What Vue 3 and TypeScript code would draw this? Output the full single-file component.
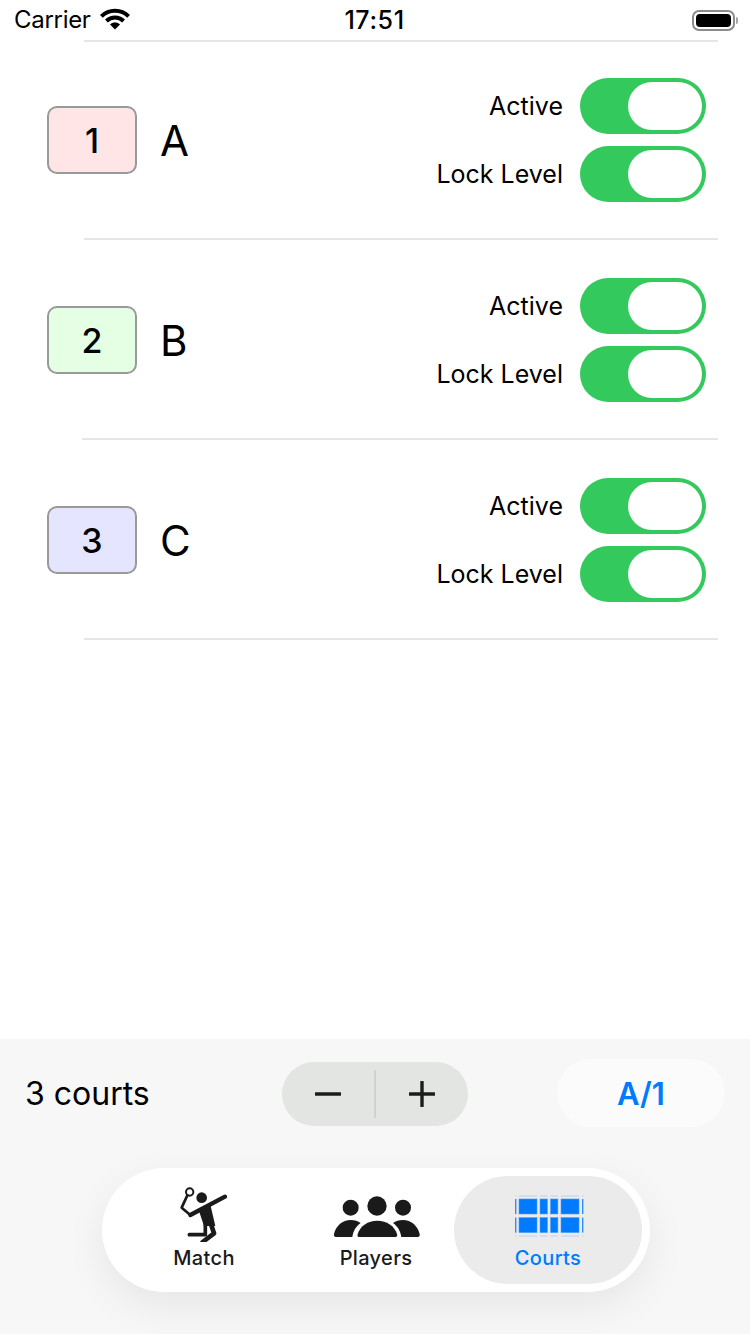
<script setup lang="ts">
import { ref } from 'vue'

type Court = { id: number; name: string; tint: string }

const courts = ref<Court[]>([
  { id: 1, name: 'A', tint: '#ffe5e5' },
  { id: 2, name: 'B', tint: '#e5ffe5' },
  { id: 3, name: 'C', tint: '#e5e5ff' },
])

const cellXs = [
  { x: 14, w: 18 },
  { x: 35, w: 7.4 },
  { x: 45.5, w: 7.4 },
  { x: 56, w: 18 },
]
</script>

<template>
  <div class="screen">
    <header class="status">
      <div class="status__left">
        <span class="status__carrier">Carrier</span>
        <svg class="wifi" width="32" height="22" viewBox="0 0 32 22">
          <path d="M2.4 8.4C9.8 1 22.2 1 29.6 8.4" fill="none" stroke="#000" stroke-width="4" />
          <path d="M7.4 13C12.4 8.4 19.6 8.4 24.6 13" fill="none" stroke="#000" stroke-width="4" />
          <path d="M11 16.4C14 13.8 18 13.8 21 16.4L16 21.6Z" fill="#000" />
        </svg>
      </div>
      <div class="status__time">17:51</div>
      <div class="status__right">
        <span class="battery"><span class="battery__fill" /></span>
        <span class="battery__nub" />
      </div>
    </header>

    <main class="list">
      <hr class="rule" />
      <template v-for="court in courts" :key="court.id">
        <section class="court" :class="{ 'court--next': court.id > 1 }">
          <div class="court__badge" :style="{ background: court.tint }">{{ court.id }}</div>
          <div class="court__name">{{ court.name }}</div>
          <div class="court__switches">
            <label class="line">
              <span>Active</span>
              <span class="toggle"><span class="toggle__knob" /></span>
            </label>
            <label class="line">
              <span>Lock Level</span>
              <span class="toggle"><span class="toggle__knob" /></span>
            </label>
          </div>
        </section>
        <hr class="rule" :class="{ 'rule--wide': court.id === 2 }" />
      </template>
    </main>

    <footer class="panel">
      <div class="tools">
        <div class="tools__count">3 courts</div>
        <div class="stepper">
          <svg width="26" height="26" viewBox="0 0 26 26"><path d="M1 13H25" stroke="#1c1c1c" stroke-width="3.4" stroke-linecap="round" /></svg>
          <span class="stepper__sep" />
          <svg width="26" height="26" viewBox="0 0 26 26"><path d="M1 13H25M13 1V25" stroke="#1c1c1c" stroke-width="3.4" stroke-linecap="round" /></svg>
        </div>
        <div class="tools__level">A/1</div>
      </div>

      <nav class="tabs">
        <div class="tab">
          <svg class="tab__icon" width="90" height="60" viewBox="207 66 270 180">
            <circle cx="299" cy="96" r="11" fill="none" stroke="#1a1a1a" stroke-width="6" />
            <circle cx="335" cy="113" r="16" fill="#1a1a1a" />
            <g fill="none" stroke="#1a1a1a" stroke-linecap="round" stroke-linejoin="round">
              <path d="M292 106L275 143L301 165" stroke-width="8" />
              <path d="M301 165L405 110" stroke-width="13" />
              <path d="M352 160L372 220L338 246" stroke-width="14" />
              <path d="M346 170L346 224L298 224" stroke-width="11" />
            </g>
            <path d="M328 156L362 138L376 198L342 198Z" fill="#1a1a1a" />
          </svg>
          <span>Match</span>
        </div>
        <div class="tab">
          <svg class="tab__icon" width="90" height="60" viewBox="33 66 270 180">
            <g fill="#1a1a1a">
              <circle cx="92" cy="143" r="24" />
              <circle cx="249" cy="143" r="24" />
              <circle cx="171" cy="138" r="29" />
              <path d="M42 222C48 197 68 180 92 180C104 180 114 183 122 189C108 199 100 212 97 231L48 231C43 231 41 227 42 222Z" />
              <path d="M299 222C293 197 273 180 249 180C237 180 227 183 219 189C233 199 241 212 244 231L293 231C298 231 300 227 299 222Z" />
              <path d="M117 231C112 231 112 226 113 222C120 198 144 182 172 182C200 182 224 198 231 222C232 226 232 231 226 231Z" />
            </g>
          </svg>
          <span>Players</span>
        </div>
        <div class="tab tab--on">
          <svg class="tab__icon" width="90" height="60" viewBox="-2 -8 90 60">
            <g fill="#d2dfee">
              <rect x="10" y="5" width="1.6" height="2" />
              <rect x="77" y="5" width="1.6" height="2" />
              <rect x="10" y="45" width="1.6" height="2" />
              <rect x="77" y="45" width="1.6" height="2" />
              <template v-for="c in cellXs" :key="c.x">
                <rect :x="c.x" y="5" :width="c.w" height="2" />
                <rect :x="c.x" y="45" :width="c.w" height="2" />
              </template>
            </g>
            <g fill="#007aff" stroke="#4d9df5" stroke-width="0.6">
              <template v-for="c in cellXs" :key="c.x">
                <rect :x="c.x" y="9" :width="c.w" height="15" />
                <rect :x="c.x" y="27.6" :width="c.w" height="15" />
              </template>
            </g>
            <g fill="#2f8ff8">
              <rect x="10" y="9" width="1.4" height="15" />
              <rect x="77" y="9" width="1.4" height="15" />
              <rect x="10" y="27.6" width="1.4" height="15" />
              <rect x="77" y="27.6" width="1.4" height="15" />
            </g>
          </svg>
          <span>Courts</span>
        </div>
      </nav>
    </footer>
  </div>
</template>

<style scoped>
.screen {
  height: 1334px;
  display: flex;
  flex-direction: column;
  background: #fff;
  color: #000;
  font-family: Inter, "Liberation Sans", sans-serif;
  overflow: hidden;
}

.status {
  height: 40px;
  flex: none;
  display: grid;
  grid-template-columns: 1fr auto 1fr;
  align-items: center;
  padding: 0 14px;
  font-size: 24px;
  line-height: 40px;
}

.status__left {
  display: flex;
  align-items: center;
  gap: 8px;
}

.status__carrier {
  letter-spacing: -0.3px;
}

.status__time {
  font-size: 25px;
  font-weight: 500;
  letter-spacing: 0.6px;
  margin-left: -1px;
}

.status__right {
  display: flex;
  justify-content: flex-end;
  align-items: center;
  gap: 1px;
}

.wifi {
  flex: none;
  margin-top: -2px;
}

.battery {
  width: 43px;
  height: 21px;
  box-sizing: border-box;
  border: 2px solid #8c8c8c;
  border-radius: 7px;
  padding: 2px;
  display: block;
}

.battery__fill {
  display: block;
  height: 100%;
  background: #000;
  border-radius: 4px;
}

.battery__nub {
  width: 2px;
  height: 7px;
  background: #a5a5a5;
  border-radius: 0 2px 2px 0;
  margin-right: -2px;
}

.list {
  flex: 1;
}

.rule {
  height: 2px;
  border: 0;
  margin: 0 32px 0 84px;
  background: #e6e6e6;
}

.rule--wide {
  margin-left: 82px;
}

.court {
  height: 196px;
  display: flex;
  align-items: center;
  padding: 0 44px 0 47px;
}

.court--next {
  margin-top: 2px;
}

.court__badge {
  width: 90px;
  height: 68px;
  box-sizing: border-box;
  border: 2px solid #999;
  border-radius: 10px;
  display: flex;
  align-items: center;
  justify-content: center;
  font-size: 34px;
  font-weight: 500;
}

.court__name {
  margin-left: 23px;
  font-size: 42px;
  font-weight: 400;
}

.court__switches {
  margin-left: auto;
  display: flex;
  flex-direction: column;
  gap: 12px;
}

.line {
  display: flex;
  justify-content: flex-end;
  align-items: center;
  gap: 17px;
  font-size: 25px;
}

.line > span:first-child {
  margin-top: -1px;
}

.toggle {
  width: 126px;
  height: 56px;
  box-sizing: border-box;
  padding: 4px;
  display: flex;
  justify-content: flex-end;
  background: #34c95c;
  border-radius: 28px;
}

.toggle__knob {
  width: 74px;
  height: 48px;
  background: #fff;
  border-radius: 24px;
}

.panel {
  flex: none;
  height: 295px;
  box-sizing: border-box;
  padding-top: 20px;
  background: #f7f7f7;
}

.tools {
  height: 68px;
  display: flex;
  align-items: center;
  padding: 0 25px;
}

.tools__count {
  width: 257px;
  font-size: 32px;
}

.stepper {
  width: 186px;
  height: 64px;
  margin-top: 2px;
  display: flex;
  align-items: center;
  justify-content: center;
  gap: 33px;
  background: #e3e5e3;
  border-radius: 32px;
}

.stepper__sep {
  width: 2px;
  height: 48px;
  background: #d0d2d0;
}

.tools__level {
  margin-left: auto;
  width: 168px;
  height: 68px;
  display: flex;
  align-items: center;
  justify-content: center;
  background: #fbfbfb;
  border-radius: 34px;
  color: #007aff;
  font-size: 31px;
  font-weight: 600;
}

.tabs {
  width: 548px;
  height: 124px;
  box-sizing: border-box;
  margin: 41px 0 0 102px;
  padding: 8px 16px;
  display: grid;
  grid-template-columns: repeat(3, 172px);
  background: #fff;
  border-radius: 62px;
  box-shadow: 0 14px 40px rgba(0, 0, 0, 0.07);
}

.tab {
  margin: 0 -8px;
  display: flex;
  flex-direction: column;
  align-items: center;
  border-radius: 54px;
  color: #1a1a1a;
  font-size: 20px;
  font-weight: 500;
  letter-spacing: 0.35px;
  line-height: 24px;
}

.tab__icon {
  display: block;
  flex: none;
  margin-top: 6px;
  margin-bottom: 4px;
}

.tab--on {
  background: #ebebeb;
  color: #007aff;
}
</style>

<style>
html,
body {
  margin: 0;
  background: #fff;
}
</style>
